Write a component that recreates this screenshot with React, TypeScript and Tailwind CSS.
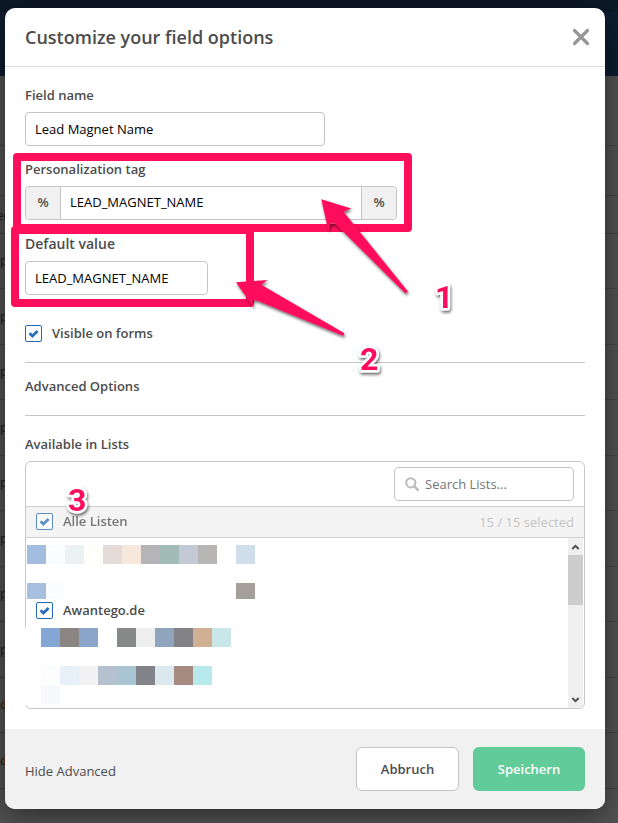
import React, { useState } from 'react';

interface CheckboxProps {
  label: string;
  checked: boolean;
  onChange: (checked: boolean) => void;
  muted?: boolean;
}

function Checkbox({ label, checked, onChange, muted = false }: CheckboxProps) {
  return (
    <label className={`flex h-5 items-start gap-2.5 leading-[18px] ${muted ? 'opacity-75' : ''}`}>
      <span className="mt-px grid h-[17px] w-[17px] shrink-0">
        <input
          type="checkbox"
          checked={checked}
          onChange={(e) => onChange(e.target.checked)}
          className="col-start-1 row-start-1 h-[17px] w-[17px] appearance-none rounded-[2px] border border-[#2568b3] bg-white"
        />
        {checked && (
          <svg viewBox="0 0 17 17" className="pointer-events-none col-start-1 row-start-1 h-[17px] w-[17px]">
            <path d="M4.6 8.2 L7.4 11 L12.6 5.9" fill="none" stroke="#2a6dbd" strokeWidth="2.8" />
          </svg>
        )}
      </span>
      <span className="font-semibold">{label}</span>
    </label>
  );
}

interface FieldProps {
  id: string;
  label: string;
  large?: boolean;
  children: React.ReactNode;
}

function Field({ id, label, large = false, children }: FieldProps) {
  return (
    <div>
      <label
        htmlFor={id}
        className={`mb-[7px] block font-semibold ${large ? 'text-[14px] leading-[21px]' : 'leading-5'}`}
      >
        {label}
      </label>
      {children}
    </div>
  );
}

function Mosaic({ colors, short = false }: { colors: string[]; short?: boolean }) {
  return (
    <div className={`flex ${short ? 'h-4' : 'h-[19px]'}`}>
      {colors.map((color, i) => (
        <span key={i} className="w-[19px]" style={{ backgroundColor: color }} />
      ))}
    </div>
  );
}

const W = '#ffffff';
const hiddenRows = [
  ['#a3bde0', '#fafcfe', '#ecf1f2', '#fffefa', '#e5dcd9', '#f6e8dc', '#b5b5b8', '#a1bbb7', '#c4cad5', '#b7b6b5', W, '#d0ddeb'],
  ['#a8c0e0', '#fafcfe', W, W, W, W, W, W, W, W, W, '#a4a099'],
  ['#83a6d5', '#8a8483', '#8ba4ca', W, '#868988', '#eeeeee', '#8fa5bd', '#838387', '#d0af92', '#c9e7e8'],
  ['#fcfefe', '#e7eff8', '#f2f2f4', '#b5c1ce', '#a9c5d4', '#838489', '#dbe8ee', '#a68b81', '#b8e9ec'],
  ['#f7f9fd'],
];

const pageRows = ['p', 'p', 'p', 'p', 'p', 'p', 'p', 'p', 'c', 'c'];

// Dimmed page behind the dialog
function PageBackdrop() {
  return (
    <div aria-hidden="true" className="absolute inset-0 overflow-hidden bg-[#535353] text-[#1e1e1e]">
      <div className="h-3 bg-[#0c1927]" />
      <div className="h-16 bg-[#0e1d30]" />
      <div className="h-[70px] border-b border-[#454545]" />
      <div className="h-[50px] border-b border-[#454545]" />
      <div className="h-[38px] border-b border-[#3f3f3f] leading-[38px]">
        <span className="-ml-1">er</span>
      </div>
      {pageRows.map((text, i) => (
        <div key={i} className="flex h-[55px] items-center border-b border-[#454545] odd:h-14">
          <span className="w-1 shrink-0">{text}</span>
          {text === 'c' && <span className="h-2.5 w-px bg-[#663420]" />}
        </div>
      ))}
    </div>
  );
}

function Annotations() {
  return (
    <svg
      width="618"
      height="823"
      viewBox="0 0 618 823"
      className="pointer-events-none absolute top-0 left-0"
    >
      <defs>
        <filter id="shadow" x="-20%" y="-20%" width="150%" height="150%">
          <feDropShadow dx="1" dy="2" stdDeviation="1.5" floodColor="#000000" floodOpacity="0.6" />
        </filter>
      </defs>
      <g fill="none" stroke="#ff0f5b" strokeWidth="8" strokeLinejoin="round">
        <rect x="17" y="157" width="391" height="71" />
        <rect x="15" y="230" width="235" height="73" />
      </g>
      <g fill="#ff0f5b" filter="url(#shadow)">
        <path d="M321.3 199.3 L351.3 208.5 L343.5 211.7 L407.5 291 Q407.5 293.5 405 293 L335 223.5 L330.5 223.5 L328.3 230.7 Z" />
        <path d="M236 282.3 L267.3 280 L261.3 284.7 L344 333 Q345 335.5 342.5 335.5 L258 301 L252.7 300 L253.5 307.5 Z" />
      </g>
      <g
        fontFamily="Roboto, Arial, sans-serif"
        fontSize="32"
        fontWeight="700"
        fill="#ff0f5b"
        stroke="#ffffff"
        strokeWidth="5"
        strokeLinejoin="round"
        paintOrder="stroke"
        filter="url(#shadow)"
      >
        <text x="435" y="308">1</text>
        <text x="360" y="370">2</text>
        <text x="68" y="511">3</text>
      </g>
    </svg>
  );
}

export default function App() {
  const [fieldName, setFieldName] = useState('Lead Magnet Name');
  const [tag, setTag] = useState('LEAD_MAGNET_NAME');
  const [defaultValue, setDefaultValue] = useState('LEAD_MAGNET_NAME');
  const [search, setSearch] = useState('');
  const [visible, setVisible] = useState(true);
  const [allLists, setAllLists] = useState(true);
  const [awantego, setAwantego] = useState(true);

  const inputClass = 'h-[34px] rounded border border-[#c4c4c4] bg-white px-[9px] text-black outline-none';

  return (
    <div className="relative min-h-screen pt-2 pr-[13px] pb-3.5 pl-[5px] font-['Open_Sans',sans-serif] text-[13px] text-[#4c4c4c]">
      <PageBackdrop />

      <div
        role="dialog"
        aria-labelledby="dialog-title"
        className="relative rounded-[10px] bg-white shadow-[0_6px_30px_rgba(0,0,0,0.5)]"
      >
        <header className="flex h-[59px] items-center justify-between border-b border-[#dcdcdc] pr-4 pl-5">
          <h2 id="dialog-title" className="text-lg font-semibold">
            Customize your field options
          </h2>
          <button type="button" aria-label="Close">
            <svg viewBox="0 0 16 16" className="h-4 w-4 overflow-visible">
              <path d="M1.5 1.5 L14.5 14.5 M14.5 1.5 L1.5 14.5" stroke="#969696" strokeWidth="3.2" strokeLinecap="round" />
            </svg>
          </button>
        </header>

        <div className="px-5 pt-[18px] pb-5">
          <div className="flex flex-col gap-[13px]">
            <Field id="field-name" label="Field name">
              <input
                id="field-name"
                value={fieldName}
                onChange={(e) => setFieldName(e.target.value)}
                className={`${inputClass} w-[300px]`}
              />
            </Field>
            <Field id="tag" label="Personalization tag">
              <div className="flex h-[34px] max-w-[372px] rounded border border-[#c4c4c4] font-semibold">
                <span className="flex w-[34px] items-center justify-center rounded-l bg-[#f1f1f1]">%</span>
                <input
                  id="tag"
                  value={tag}
                  onChange={(e) => setTag(e.target.value)}
                  className="min-w-0 flex-1 border-x border-[#c4c4c4] bg-white px-[9px] font-normal text-black outline-none"
                />
                <span className="flex w-[34px] items-center justify-center rounded-r bg-[#f1f1f1]">%</span>
              </div>
            </Field>
            <Field id="default-value" label="Default value" large>
              <input
                id="default-value"
                value={defaultValue}
                onChange={(e) => setDefaultValue(e.target.value)}
                className={`${inputClass} w-[183px]`}
              />
            </Field>
          </div>

          <div className="mt-[29px] mb-[18px] flex h-5 items-center">
            <Checkbox label="Visible on forms" checked={visible} onChange={setVisible} />
          </div>
          <div className="border-y border-[#c4c4c4] pt-[13px] pb-[19px] leading-5 font-semibold">Advanced Options</div>

          <h3 className="mt-[18px] mb-[7px] leading-5 font-semibold">Available in Lists</h3>
          <div className="rounded-md border border-[#c8c8c8]">
            <div className="flex justify-end px-2.5 py-[5px]">
              <label className="flex h-[34px] w-[180px] items-center gap-1.5 rounded border border-[#c4c4c4] px-2.5">
                <svg viewBox="0 0 14 14" className="h-3.5 w-3.5 shrink-0">
                  <circle cx="5.8" cy="5.8" r="4.6" fill="none" stroke="#bcbcbc" strokeWidth="2" />
                  <path d="M9.2 9.2 L12.8 12.8" stroke="#bcbcbc" strokeWidth="2.4" strokeLinecap="round" />
                </svg>
                <input
                  type="text"
                  aria-label="Search Lists"
                  placeholder="Search Lists..."
                  value={search}
                  onChange={(e) => setSearch(e.target.value)}
                  className="min-w-0 flex-1 pt-px outline-none placeholder:text-[#757575]"
                />
              </label>
            </div>
            <div className="flex h-8 items-center justify-between border-y border-[#d0d0d0] bg-[#f4f4f4] px-2.5">
              <Checkbox label="Alle Listen" checked={allLists} onChange={setAllLists} muted />
              <span className="leading-5 text-[#c4c4c4]">15 / 15 selected</span>
            </div>
            <div className="flex h-[170px]">
              <div className="min-w-0 flex-1">
                <div className="flex flex-col gap-[19px] pt-[7px] pl-px">
                  <Mosaic colors={hiddenRows[0]} />
                  <Mosaic colors={hiddenRows[1]} short />
                </div>
                <div className="flex h-6 items-center pl-2.5">
                  <Checkbox label="Awantego.de" checked={awantego} onChange={setAwantego} />
                </div>
                <div className="mt-[5px] -ml-px h-[77px] bg-white pl-4">
                  <Mosaic colors={hiddenRows[2]} />
                  <div className="pt-[19px]">
                    <Mosaic colors={hiddenRows[3]} />
                    <Mosaic colors={hiddenRows[4]} />
                  </div>
                </div>
              </div>
              <div className="mr-px flex w-[15px] flex-col items-center justify-between rounded-br bg-[#f0f0f0]">
                <div className="flex w-full flex-col items-center">
                  <svg viewBox="0 0 15 17" className="h-[17px] w-[15px]">
                    <path d="M4.3 11 L7.5 7.8 L10.7 11" fill="none" stroke="#505050" strokeWidth="2" />
                  </svg>
                  <div className="h-[50px] w-full bg-[#cdcdcd]" />
                </div>
                <svg viewBox="0 0 15 17" className="h-[17px] w-[15px]">
                  <path d="M4.3 7 L7.5 10.2 L10.7 7" fill="none" stroke="#505050" strokeWidth="2" />
                </svg>
              </div>
            </div>
          </div>
        </div>

        <footer className="flex h-20 items-center justify-between rounded-b-[10px] bg-[#f1f1f1] px-5">
          <a href="#advanced" className="mt-1.5">
            Hide Advanced
          </a>
          <div className="flex gap-3.5 font-semibold">
            <button type="button" className="h-11 w-[103px] rounded-md border border-[#c4c4c4] bg-white pt-0.5">
              Abbruch
            </button>
            <button type="button" className="h-11 w-28 rounded-md bg-[#62cb9a] pt-0.5 text-white">
              Speichern
            </button>
          </div>
        </footer>
      </div>

      <Annotations />
    </div>
  );
}
